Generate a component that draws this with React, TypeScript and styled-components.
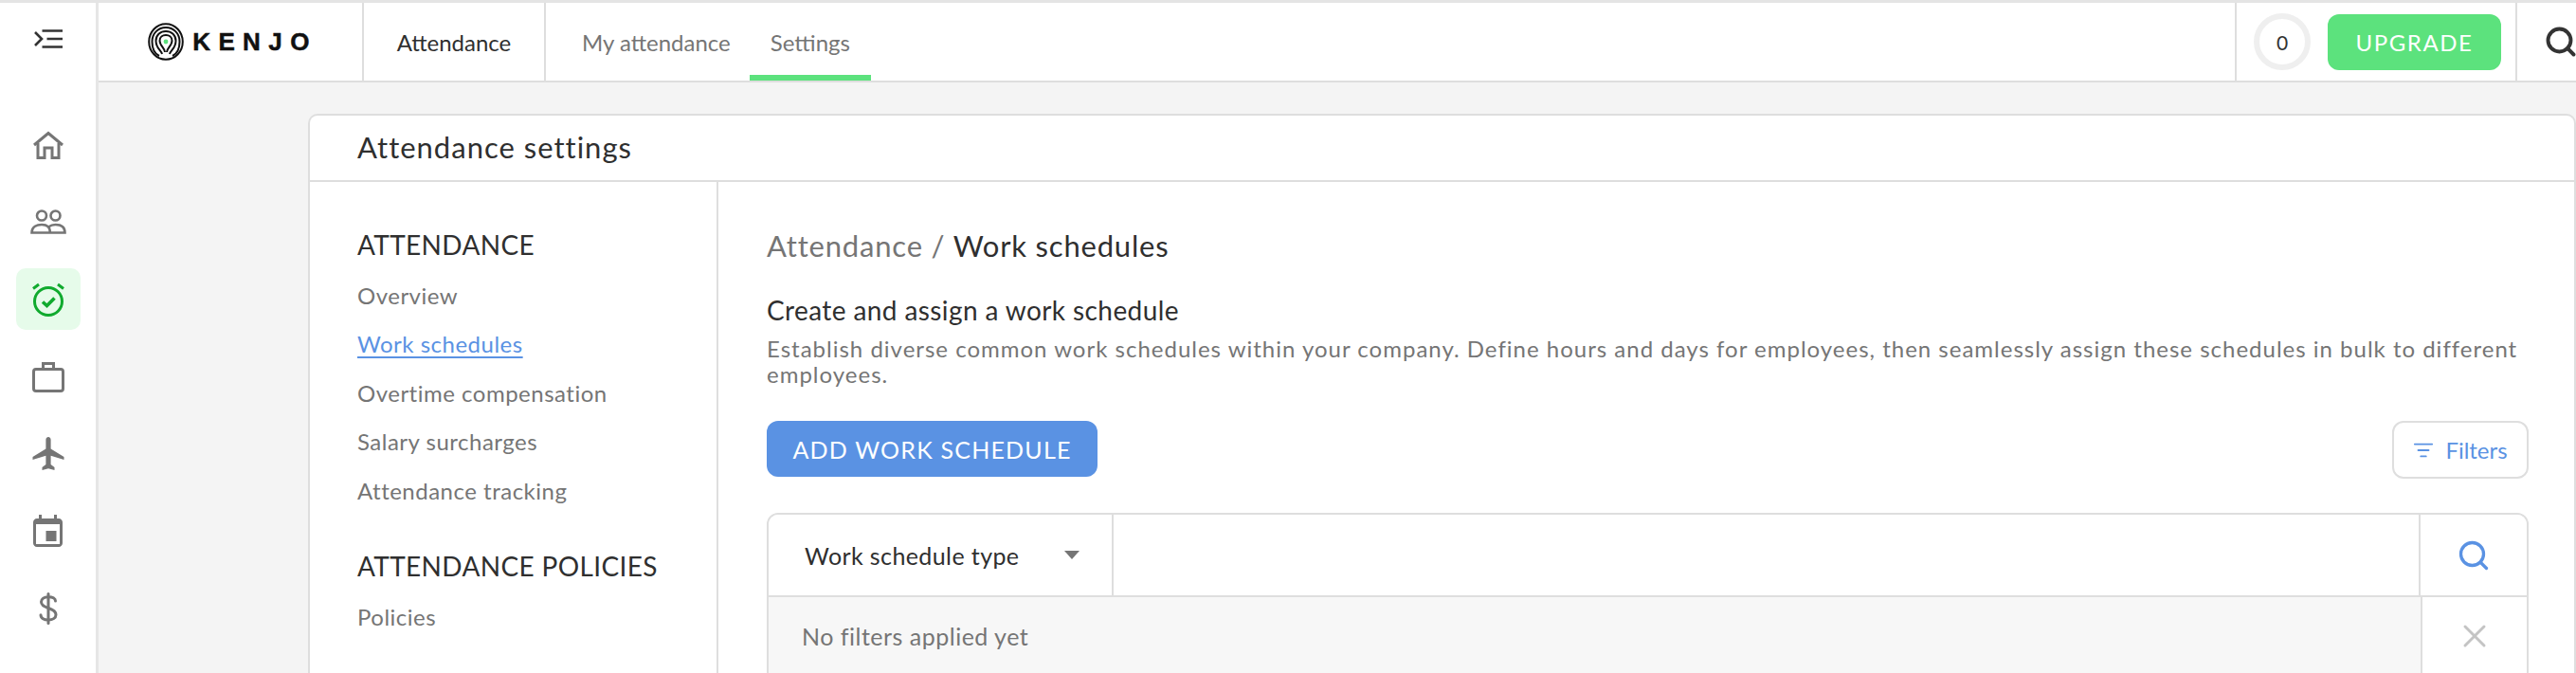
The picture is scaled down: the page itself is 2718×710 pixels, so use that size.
import React from 'react';
import styled, { createGlobalStyle } from 'styled-components';
import { Search, X, ListFilter } from 'lucide-react';

// --- Global ---

const GlobalStyle = createGlobalStyle`
  html, body {
    margin: 0;
    padding: 0;
    height: 710px;
    overflow: hidden;
    background: #f4f4f4;
    font-family: "Lato", "Noto Sans", sans-serif;
  }
  * { box-sizing: border-box; }
`;

const borderColor = '#dedede';

// --- Shell ---

const Page = styled.div`
  display: flex;
  width: 2718px;
  height: 710px;
  border-top: 3px solid #e4e4e4;
`;

const Rail = styled.nav`
  width: 104px;
  flex-shrink: 0;
  background: #fff;
  border-right: 3px solid #e6e6e6;
  display: flex;
  flex-direction: column;
  align-items: center;
`;

const RailToggle = styled.div`
  height: 76px;
  display: flex;
  align-items: center;
  justify-content: center;
  color: #333;
`;

const RailList = styled.div`
  display: flex;
  flex-direction: column;
  align-items: center;
  padding-top: 41px;
  gap: 16.5px;
`;

const RailItem = styled.div<{ $active?: boolean }>`
  width: 68px;
  height: 65px;
  display: flex;
  align-items: center;
  justify-content: center;
  border-radius: 10px;
  color: ${({ $active }) => ($active ? '#10aa2e' : '#757575')};
  background: ${({ $active }) => ($active ? '#e6fbea' : 'transparent')};
`;

const Main = styled.div`
  flex: 1;
  min-width: 0;
  display: flex;
  flex-direction: column;
`;

// --- Top bar ---

const TopBar = styled.header`
  height: 84px;
  flex-shrink: 0;
  display: flex;
  background: #fff;
  border-bottom: 2px solid ${borderColor};
`;

const TopCell = styled.div<{ $width?: number; $inset?: number }>`
  width: ${({ $width }) => ($width ? `${$width}px` : 'auto')};
  padding-left: ${({ $inset }) => $inset || 0}px;
  display: flex;
  align-items: center;
  justify-content: center;
  border-right: 2px solid ${borderColor};
  flex-shrink: 0;
`;

const LogoWord = styled.span`
  font-family: "Liberation Sans", sans-serif;
  font-size: 26px;
  font-weight: 700;
  letter-spacing: 8.4px;
  color: #111;
  margin-left: 9px;
  -webkit-text-stroke: 0.5px #111;
`;

const ModuleName = styled.span`
  font-size: 24px;
  color: #2f2f2f;
`;

const Tabs = styled.div`
  flex: 1;
  display: flex;
  padding-left: 38px;
`;

const Tab = styled.div<{ $active?: boolean }>`
  display: flex;
  align-items: center;
  padding: ${({ $active }) => ($active ? '6px 22px 0' : '6px 20px 0 0')};
  font-size: 24px;
  color: #757575;
  border-bottom: 6px solid ${({ $active }) => ($active ? '#5ce27d' : 'transparent')};
`;

const Credits = styled.div`
  width: 298px;
  flex-shrink: 0;
  display: flex;
  align-items: center;
  padding-left: 18px;
  border-left: 2px solid ${borderColor};
  border-right: 2px solid ${borderColor};
`;

const Ring = styled.div`
  width: 60px;
  height: 60px;
  border-radius: 50%;
  border: 6px solid #efefef;
  display: flex;
  align-items: center;
  justify-content: center;
  font-size: 21px;
  color: #333;
  margin-right: 18px;
`;

const Upgrade = styled.div`
  width: 183px;
  height: 59px;
  background: #5ce27d;
  border-radius: 12px;
  color: #fff;
  font-size: 24px;
  letter-spacing: 1.6px;
  display: flex;
  align-items: center;
  justify-content: center;
`;

const TopSearch = styled.div`
  width: 62px;
  flex-shrink: 0;
  display: flex;
  align-items: center;
  padding-left: 28px;
  overflow: hidden;
  color: #333;

  svg { flex-shrink: 0; }
`;

// --- Card ---

const Canvas = styled.main`
  flex: 1;
  min-height: 0;
  padding: 33px 0 0 221px;
  overflow: hidden;
`;

const Card = styled.section`
  background: #fff;
  border: 2px solid ${borderColor};
  border-bottom: none;
  border-radius: 10px 10px 0 0;
  height: 600px;
  display: flex;
  flex-direction: column;
`;

const CardHeader = styled.div`
  height: 70px;
  flex-shrink: 0;
  padding: 0 0 3px 50px;
  display: flex;
  align-items: center;
  font-size: 31px;
  letter-spacing: 1px;
  color: #2f2f2f;
  border-bottom: 2px solid ${borderColor};
`;

const CardBody = styled.div`
  flex: 1;
  display: flex;
  min-height: 0;
`;

const SideMenu = styled.aside`
  width: 431px;
  flex-shrink: 0;
  border-right: 2px solid ${borderColor};
  padding: 50px 0 0 50px;
`;

const MenuHeading = styled.h3<{ $spaced?: boolean }>`
  margin: ${({ $spaced }) => ($spaced ? '48px' : '0')} 0 0;
  font-size: 28px;
  line-height: 33px;
  font-weight: 400;
  letter-spacing: 0.35px;
  color: #2f2f2f;
`;

const MenuItem = styled.a<{ $active?: boolean }>`
  display: block;
  font-size: 24px;
  line-height: 30px;
  letter-spacing: 0.5px;
  margin-top: 21.6px;
  color: ${({ $active }) => ($active ? '#5a92e3' : '#757575')};
  text-decoration: ${({ $active }) => ($active ? 'underline' : 'none')};
  text-underline-offset: 4px;
`;

const Content = styled.div`
  flex: 1;
  min-width: 0;
  padding: 48px 48px 0 51px;
`;

const Crumbs = styled.div`
  font-size: 31px;
  line-height: 38px;
  letter-spacing: 0.8px;
  color: #757575;
  span { color: #2f2f2f; }
`;

const Lead = styled.h4`
  margin: 32px 0 0;
  font-size: 28px;
  line-height: 34px;
  font-weight: 400;
  letter-spacing: 0.4px;
  color: #2f2f2f;
`;

const Blurb = styled.p`
  margin: 10px 0 0;
  font-size: 24px;
  line-height: 27px;
  letter-spacing: 1px;
  color: #757575;
`;

const ActionRow = styled.div`
  margin-top: 36px;
  display: flex;
  align-items: flex-start;
  justify-content: space-between;
`;

const PrimaryButton = styled.button`
  width: 349px;
  height: 59px;
  background: #5a92e3;
  border: none;
  border-radius: 12px;
  color: #fff;
  font-family: inherit;
  font-size: 25px;
  letter-spacing: 1.2px;
`;

const FilterButton = styled.button`
  width: 144px;
  height: 61px;
  background: #fff;
  border: 2px solid ${borderColor};
  border-radius: 12px;
  color: #5a92e3;
  font-family: inherit;
  font-size: 24px;
  display: flex;
  align-items: center;
  justify-content: center;
  gap: 12px;
`;

const FilterTable = styled.div`
  margin-top: 36px;
  border: 2px solid ${borderColor};
  border-radius: 12px;
  overflow: hidden;
`;

const FilterRow = styled.div<{ $muted?: boolean }>`
  display: grid;
  grid-template-columns: ${({ $muted }) => ($muted ? '1fr 112px' : '364px 1fr 112px')};
  height: ${({ $muted }) => ($muted ? '90px' : '85px')};
  background: ${({ $muted }) => ($muted ? '#f7f7f7' : '#fff')};
  & + & { border-top: 2px solid ${borderColor}; }
`;

const TypeCell = styled.div`
  display: flex;
  align-items: center;
  justify-content: space-between;
  padding: 0 34px 0 38px;
  border-right: 2px solid ${borderColor};
  font-size: 25px;
  letter-spacing: 0.4px;
  color: #2f2f2f;
`;

const Caret = styled.i`
  width: 0;
  height: 0;
  border-left: 8px solid transparent;
  border-right: 8px solid transparent;
  border-top: 9px solid #757575;
`;

const BlankCell = styled.div`
  border-right: 2px solid ${borderColor};
`;

const IconCell = styled.div<{ $white?: boolean }>`
  display: flex;
  align-items: center;
  justify-content: center;
  padding-bottom: ${({ $white }) => ($white ? '6px' : '0')};
  background: ${({ $white }) => ($white ? '#fff' : 'transparent')};
  border-left: ${({ $white }) => ($white ? `2px solid ${borderColor}` : 'none')};
`;

const EmptyNote = styled.div`
  display: flex;
  align-items: center;
  padding: 0 0 6px 35px;
  font-size: 25px;
  letter-spacing: 0.5px;
  color: #757575;
`;

// --- Drawn icons ---

const KenjoMark = () => (
  <svg width="38" height="40" viewBox="0 0 38 40" fill="none" stroke="#111" strokeWidth="2">
    <ellipse cx="19" cy="20" rx="17.8" ry="18.8" />
    <path d="M12 35C6 32 4.5 26 4.5 20C4.5 11 11 5 19 5C27 5 33.5 11 33.5 20C33.5 26 32 32 26 35" />
    <path d="M15 33C14 29 8.5 27 8.5 19C8.5 13 13 9 19 9C25 9 29.5 13 29.5 19C29.5 27 24 29 23 33" />
    <path d="M18 31C18 27 12.5 24 12.5 19C12.5 15 15.5 13 19 13C22.5 13 25.5 15 25.5 19C25.5 24 20 27 20 31" />
    <circle cx="19" cy="20" r="2.4" fill="#5ce27d" stroke="none" />
  </svg>
);

const MenuToggle = () => (
  <svg width="30" height="22" viewBox="0 0 30 22" fill="none" stroke="currentColor" strokeWidth="2.6">
    <path d="M8.5 2.5H30M13.5 11H30M8.5 19.5H30" />
    <path d="M1 4L8 11L1 18" />
  </svg>
);

const HomeIcon = () => (
  <svg width="34" height="30" viewBox="0 0 34 30" fill="none" stroke="currentColor" strokeWidth="3">
    <path d="M2 15L17 2.5L32 15" />
    <path d="M6 13V28.5H13V18H21V28.5H28V13" />
  </svg>
);

const PeopleIcon = () => (
  <svg width="38" height="26" viewBox="0 0 38 26" fill="none" stroke="currentColor" strokeWidth="2.6">
    <circle cx="12" cy="6.5" r="5" />
    <circle cx="26.5" cy="6.5" r="5" />
    <path d="M1.5 24.5C1.5 18 7 16 12 16C17 16 21 18 21 24.5ZM1.5 24.5H36.5C36.5 18 32 16 26.5 16C23.5 16 21 17 19 18.5" />
  </svg>
);

const ClockIcon = () => (
  <svg width="36" height="36" viewBox="0 0 36 36" fill="none" stroke="currentColor" strokeWidth="3">
    <circle cx="18" cy="20" r="14.5" />
    <path d="M2 6.5L8 2M34 6.5L28 2" />
    <path d="M12 20.5L16.5 24.5L24.5 16.5" strokeWidth="3.6" />
  </svg>
);

const BriefcaseIcon = () => (
  <svg width="34" height="33" viewBox="0 0 34 33" fill="none" stroke="currentColor" strokeWidth="3">
    <rect x="1.5" y="8.5" width="31" height="23" rx="2.5" />
    <path d="M11.5 8V2.5H22.5V8" />
  </svg>
);

const PlaneIcon = () => (
  <svg width="34" height="36" viewBox="0 0 34 36" fill="currentColor">
    <path d="M17 0C18.6 0 19.6 1.4 19.6 3V12.4L33.5 21V24L19.6 19.8V29L23.5 32V35L17 33.2L10.5 35V32L14.4 29V19.8L.5 24V21L14.4 12.4V3C14.4 1.4 15.4 0 17 0Z" />
  </svg>
);

const CalendarIcon = () => (
  <svg width="31" height="34" viewBox="0 0 31 34" fill="currentColor">
    <path d="M6 0H9V4H22V0H25V4H27C29.2 4 31 5.8 31 8V30C31 32.2 29.2 34 27 34H4C1.8 34 0 32.2 0 30V8C0 5.8 1.8 4 4 4H6ZM3 10V31H28V10Z" />
    <rect x="13.5" y="17" width="11" height="11" />
  </svg>
);

const DollarIcon = () => (
  <svg width="20" height="34" viewBox="0 0 20 34" fill="none" stroke="currentColor" strokeWidth="3" strokeLinecap="round">
    <path d="M10 1.5V32.5" />
    <path d="M17.5 9C17.5 6 14.5 4.7 10 4.7C5.5 4.7 2.5 6.8 2.5 10C2.5 13.5 5.5 15 10 16.5C14.5 18 18 19.5 18 23.5C18 27 14.5 29 10 29C5.5 29 2 27.2 2 23.8" />
  </svg>
);

// --- Page ---

const App: React.FC = () => (
  <>
    <GlobalStyle />
    <Page>
      <Rail>
        <RailToggle><MenuToggle /></RailToggle>
        <RailList>
          <RailItem><HomeIcon /></RailItem>
          <RailItem><PeopleIcon /></RailItem>
          <RailItem $active><ClockIcon /></RailItem>
          <RailItem><BriefcaseIcon /></RailItem>
          <RailItem><PlaneIcon /></RailItem>
          <RailItem><CalendarIcon /></RailItem>
          <RailItem><DollarIcon /></RailItem>
        </RailList>
      </Rail>
      <Main>
        <TopBar>
          <TopCell $width={280} $inset={5}>
            <KenjoMark />
            <LogoWord>KENJO</LogoWord>
          </TopCell>
          <TopCell $width={192}>
            <ModuleName>Attendance</ModuleName>
          </TopCell>
          <Tabs>
            <Tab>My attendance</Tab>
            <Tab $active>Settings</Tab>
          </Tabs>
          <Credits>
            <Ring>0</Ring>
            <Upgrade>UPGRADE</Upgrade>
          </Credits>
          <TopSearch><Search size={36} strokeWidth={2.6} /></TopSearch>
        </TopBar>
        <Canvas>
          <Card>
            <CardHeader>Attendance settings</CardHeader>
            <CardBody>
              <SideMenu>
                <MenuHeading>ATTENDANCE</MenuHeading>
                <MenuItem>Overview</MenuItem>
                <MenuItem $active>Work schedules</MenuItem>
                <MenuItem>Overtime compensation</MenuItem>
                <MenuItem>Salary surcharges</MenuItem>
                <MenuItem>Attendance tracking</MenuItem>
                <MenuHeading $spaced>ATTENDANCE POLICIES</MenuHeading>
                <MenuItem>Policies</MenuItem>
              </SideMenu>
              <Content>
                <Crumbs>Attendance / <span>Work schedules</span></Crumbs>
                <Lead>Create and assign a work schedule</Lead>
                <Blurb>
                  Establish diverse common work schedules within your company. Define hours and days for employees, then seamlessly assign these schedules in bulk to different employees.
                </Blurb>
                <ActionRow>
                  <PrimaryButton>ADD WORK SCHEDULE</PrimaryButton>
                  <FilterButton><ListFilter size={22} />Filters</FilterButton>
                </ActionRow>
                <FilterTable>
                  <FilterRow>
                    <TypeCell>Work schedule type<Caret /></TypeCell>
                    <BlankCell />
                    <IconCell><Search size={36} color="#5a92e3" strokeWidth={2.2} /></IconCell>
                  </FilterRow>
                  <FilterRow $muted>
                    <EmptyNote>No filters applied yet</EmptyNote>
                    <IconCell $white><X size={40} color="#c4c4c4" strokeWidth={1.8} /></IconCell>
                  </FilterRow>
                </FilterTable>
              </Content>
            </CardBody>
          </Card>
        </Canvas>
      </Main>
    </Page>
  </>
);

export default App;
